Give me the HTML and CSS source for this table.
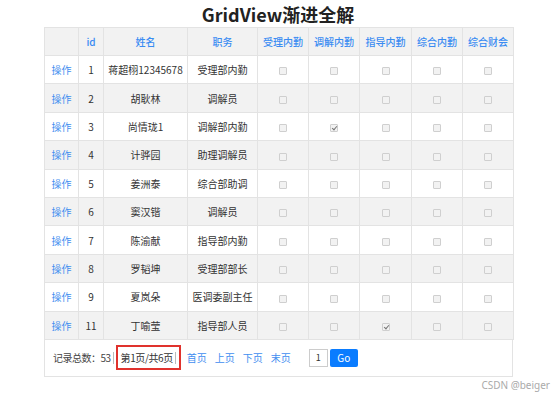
FILE: index.html
```html
<!DOCTYPE html>
<html lang="zh-CN">
<head>
    <meta charset="UTF-8">
    <title>GridView渐进全解</title>
    <link rel="stylesheet" href="styles.css">
</head>
<body>
    <h2 class="title">GridView渐进全解</h2>
    <div class="grid">
        <table class="gv">
            <colgroup>
                <col style="width:34px"><col style="width:25px"><col style="width:84px"><col style="width:70px">
                <col style="width:51px"><col style="width:51px"><col style="width:52px"><col style="width:51px"><col style="width:51px">
            </colgroup>
            <tr class="head">
                <th></th><th>id</th><th>姓名</th><th>职务</th>
                <th>受理内勤</th><th>调解内勤</th><th>指导内勤</th><th>综合内勤</th><th>综合财会</th>
            </tr>
            <tr>
                <td><a href="#">操作</a></td><td>1</td><td>蒋超栩12345678</td><td>受理部内勤</td>
                <td><i class="cb"></i></td><td><i class="cb"></i></td><td><i class="cb"></i></td><td><i class="cb"></i></td><td><i class="cb"></i></td>
            </tr>
            <tr class="alt">
                <td><a href="#">操作</a></td><td>2</td><td>胡耿林</td><td>调解员</td>
                <td><i class="cb"></i></td><td><i class="cb"></i></td><td><i class="cb"></i></td><td><i class="cb"></i></td><td><i class="cb"></i></td>
            </tr>
            <tr>
                <td><a href="#">操作</a></td><td>3</td><td>尚情珑1</td><td>调解部内勤</td>
                <td><i class="cb"></i></td><td><i class="cb on"></i></td><td><i class="cb"></i></td><td><i class="cb"></i></td><td><i class="cb"></i></td>
            </tr>
            <tr class="alt">
                <td><a href="#">操作</a></td><td>4</td><td>计骅园</td><td>助理调解员</td>
                <td><i class="cb"></i></td><td><i class="cb"></i></td><td><i class="cb"></i></td><td><i class="cb"></i></td><td><i class="cb"></i></td>
            </tr>
            <tr>
                <td><a href="#">操作</a></td><td>5</td><td>姜洲泰</td><td>综合部助调</td>
                <td><i class="cb"></i></td><td><i class="cb"></i></td><td><i class="cb"></i></td><td><i class="cb"></i></td><td><i class="cb"></i></td>
            </tr>
            <tr class="alt">
                <td><a href="#">操作</a></td><td>6</td><td>窦汉锴</td><td>调解员</td>
                <td><i class="cb"></i></td><td><i class="cb"></i></td><td><i class="cb"></i></td><td><i class="cb"></i></td><td><i class="cb"></i></td>
            </tr>
            <tr>
                <td><a href="#">操作</a></td><td>7</td><td>陈渝献</td><td>指导部内勤</td>
                <td><i class="cb"></i></td><td><i class="cb"></i></td><td><i class="cb"></i></td><td><i class="cb"></i></td><td><i class="cb"></i></td>
            </tr>
            <tr class="alt">
                <td><a href="#">操作</a></td><td>8</td><td>罗韬坤</td><td>受理部部长</td>
                <td><i class="cb"></i></td><td><i class="cb"></i></td><td><i class="cb"></i></td><td><i class="cb"></i></td><td><i class="cb"></i></td>
            </tr>
            <tr>
                <td><a href="#">操作</a></td><td>9</td><td>夏岚朵</td><td>医调委副主任</td>
                <td><i class="cb"></i></td><td><i class="cb"></i></td><td><i class="cb"></i></td><td><i class="cb"></i></td><td><i class="cb"></i></td>
            </tr>
            <tr class="alt">
                <td><a href="#">操作</a></td><td>11</td><td>丁喻莹</td><td>指导部人员</td>
                <td><i class="cb"></i></td><td><i class="cb"></i></td><td><i class="cb on"></i></td><td><i class="cb"></i></td><td><i class="cb"></i></td>
            </tr>
        </table>
        <div class="pager">
            <span class="total">记录总数：53</span>
            <span class="sep"></span>
            <span class="current">第1页/共6页<span class="sep"></span></span>
            <a href="#">首页</a>
            <a href="#">上页</a>
            <a href="#">下页</a>
            <a href="#">末页</a>
            <input class="page-no" type="text" value="1">
            <button class="go">Go</button>
        </div>
    </div>
    <div class="mark">CSDN @beiger</div>
</body>
</html>
```

FILE: styles.css
```css
body {
    margin: 0;
    background: #fff;
    font-family: "Noto Sans CJK SC", "Noto Sans", sans-serif;
    color: #333;
}
.title {
    margin: 0;
    height: 27px;
    line-height: 29px;
    text-align: center;
    font-size: 18px;
    font-weight: bold;
    color: #222;
    padding-left: 2px;
}
.grid {
    width: 469px;
    margin-left: 44px;
}
.gv {
    width: 469px;
    border-collapse: collapse;
    table-layout: fixed;
    font-size: 10px;
}
.gv th, .gv td {
    border: 1px solid #e3e3e3;
    text-align: center;
    padding: 0;
    height: 27px;
    white-space: nowrap;
    overflow: hidden;
}
.gv tr td { height: 27.4px; }
.gv th {
    background: #f2f2f2;
    color: #3a8cf2;
    font-weight: 500;
    font-size: 10px;
}
.gv .alt td { background: #f2f2f2; }
.gv a {
    color: #3f8ef0;
    text-decoration: none;
}
.cb {
    display: inline-block;
    width: 6px;
    height: 6px;
    border: 1px solid #cfcfcf;
    border-radius: 1px;
    background: #f2f2f2;
    vertical-align: middle;
    position: relative;
}
.cb.on::after {
    content: "";
    position: absolute;
    left: 2px;
    top: 0;
    width: 2px;
    height: 4px;
    border: solid #777;
    border-width: 0 1px 1px 0;
    transform: rotate(40deg);
}
.pager {
    display: flex;
    align-items: center;
    height: 36px;
    padding-left: 8px;
    border: 1px solid #e3e3e3;
    border-top: none;
    font-size: 10px;
    color: #444;
}
.total { letter-spacing: -0.5px; }
.pager .sep {
    display: inline-block;
    width: 1px;
    height: 12px;
    background: #bbb;
    margin: 0 2px;
}
.current {
    display: flex;
    align-items: center;
    height: 21px;
    padding: 0 1px 0 3px;
    border: 2px solid #e0322d;
    margin-right: 6px;
    color: #333;
    letter-spacing: -0.4px;
}
.pager a {
    color: #3f8ef0;
    text-decoration: none;
    margin-right: 8px;
}
.page-no {
    width: 19px;
    height: 18px;
    box-sizing: border-box;
    border: 1px solid #ccc;
    font-size: 9px;
    text-align: center;
    padding: 0;
    margin-left: 10px;
    font-family: inherit;
    color: #333;
}
.go {
    width: 28px;
    height: 18px;
    margin-left: 2px;
    border: none;
    border-radius: 2px;
    background: #0a7cff;
    color: #fff;
    font-size: 10px;
    font-family: inherit;
    padding: 0;
}
.mark {
    text-align: right;
    padding-right: 4px;
    margin-top: 1px;
    font-size: 10px;
    color: #aaa;
    font-family: "Noto Sans", sans-serif;
}
```
